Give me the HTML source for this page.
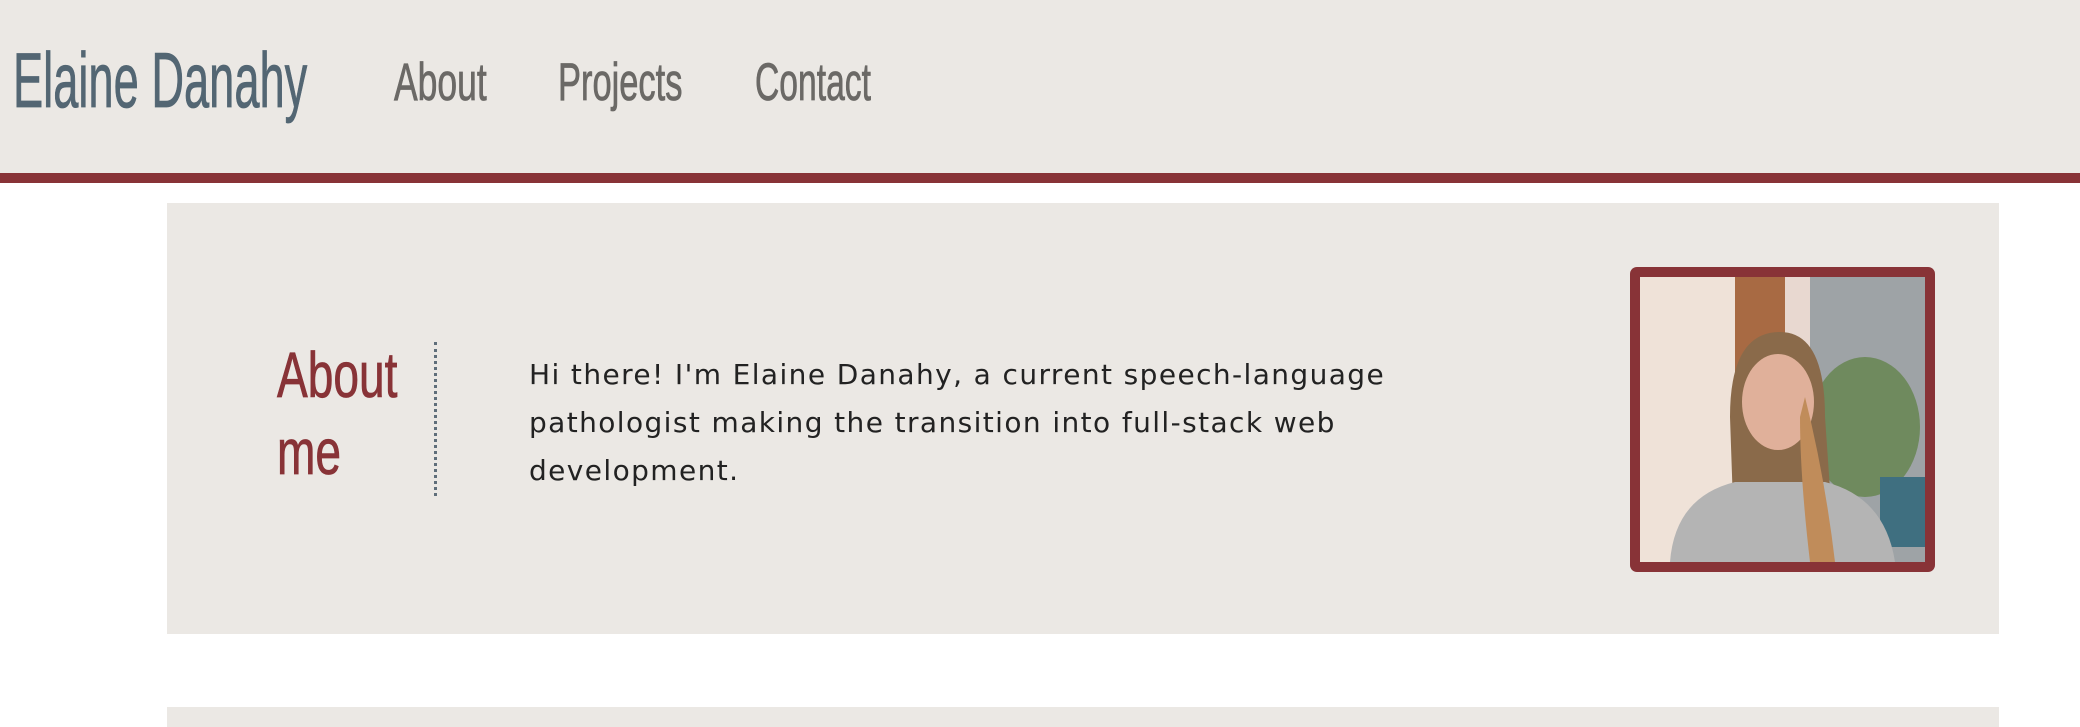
<!DOCTYPE html>
<html><head><meta charset="utf-8"><style>
*{margin:0;padding:0;box-sizing:border-box}
body{width:2080px;height:718px;background:#fff;position:relative;overflow:hidden;font-family:"Liberation Sans",sans-serif}
.hdr{position:absolute;left:0;top:0;width:2080px;background:#ebe8e4;border-bottom:10px solid #883337;height:183px}
.c{position:absolute;white-space:nowrap;transform-origin:0 0;line-height:1;-webkit-text-stroke:0.8px currentColor}
.box{position:absolute;left:167px;width:1832px;background:#ebe8e4}
p{position:absolute;left:529px;top:351px;font-family:"DejaVu Sans",sans-serif;font-size:28px;line-height:48px;color:#222;letter-spacing:1.4px;white-space:nowrap}
</style></head><body>
<div class="hdr"></div>
<div class="c" style="left:13px;top:41px;font-size:78px;color:#536673;transform:scaleX(0.58)">Elaine Danahy</div>
<div class="c" style="left:394px;top:56px;font-size:53px;color:#6b6966;transform:scaleX(0.67)">About</div>
<div class="c" style="left:558px;top:56px;font-size:53px;color:#6b6966;transform:scaleX(0.65)">Projects</div>
<div class="c" style="left:755px;top:56px;font-size:53px;color:#6b6966;transform:scaleX(0.635)">Contact</div>
<div class="box" style="top:203px;height:431px"></div>
<div class="box" style="top:707px;height:20px"></div>
<div class="c" style="left:277px;top:343px;font-size:64px;color:#883337;transform:scaleX(0.72)">About</div>
<div class="c" style="left:277px;top:420px;font-size:64px;color:#883337;transform:scaleX(0.72)">me</div>
<div style="position:absolute;left:434px;top:342px;height:154px;border-left:3px dotted #5f6e7a"></div>
<p>Hi there! I'm Elaine Danahy, a current speech-language<br>pathologist making the transition into full-stack web<br>development.</p>
<div style="position:absolute;left:1630px;top:267px;width:305px;height:305px;background:#883337;border-radius:7px;padding:10px">
<svg width="285" height="285" viewBox="0 0 285 285" style="display:block">
<rect width="285" height="285" fill="#efe2d8"/>
<rect x="95" y="0" width="50" height="150" fill="#a86a43"/>
<rect x="145" y="0" width="25" height="200" fill="#e8d8d0"/>
<rect x="170" y="0" width="115" height="285" fill="#9ea3a6"/>
<ellipse cx="225" cy="150" rx="55" ry="70" fill="#6f8a5e"/>
<rect x="240" y="200" width="45" height="70" fill="#3f6f80"/>
<path d="M90 140 Q90 55 140 55 Q185 55 185 140 L195 285 L95 285 Z" fill="#8a6a4a"/>
<ellipse cx="138" cy="125" rx="36" ry="48" fill="#e0b09a"/>
<path d="M30 285 Q35 220 95 205 L185 205 Q245 220 255 285 Z" fill="#b4b4b4"/>
<path d="M165 120 Q185 200 195 285 L170 285 Q160 200 160 140 Z" fill="#c08c5a"/>
</svg></div>
</body></html>
